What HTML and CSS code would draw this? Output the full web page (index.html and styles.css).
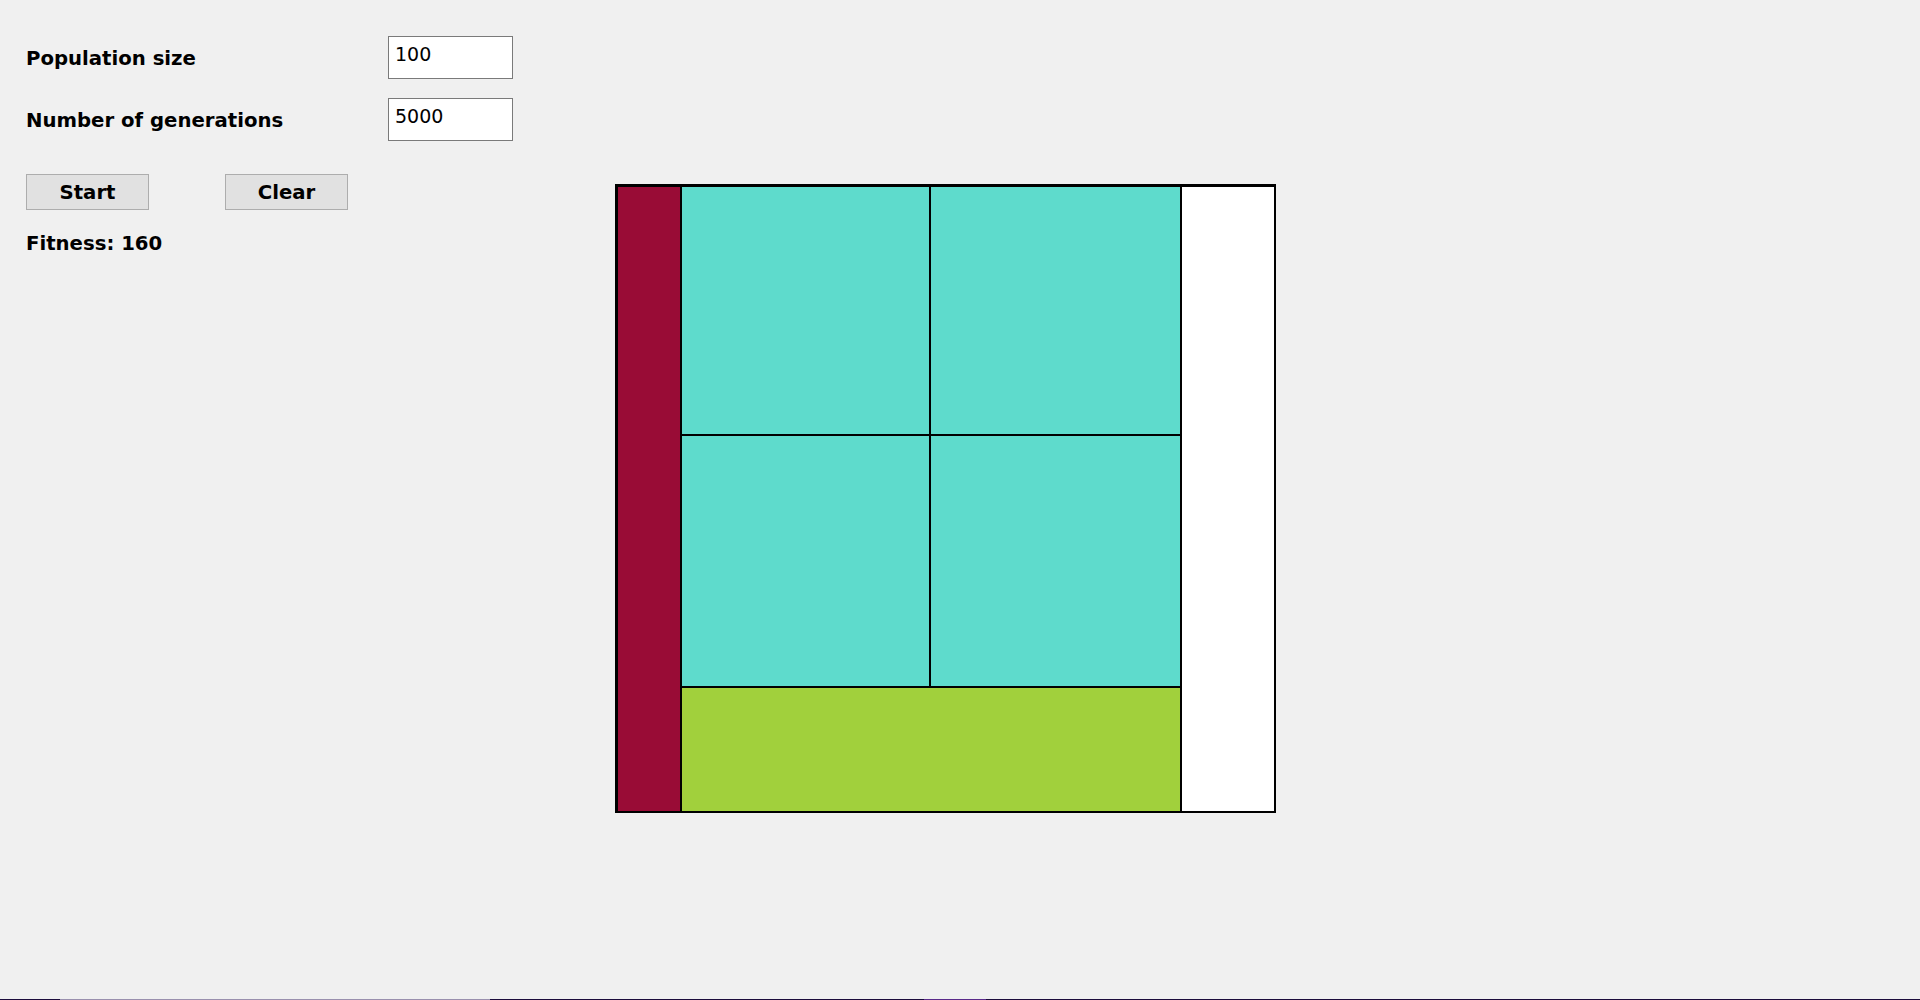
FILE: index.html
```html
<!DOCTYPE html>
<html>
<head>
<meta charset="utf-8">
<title>Genetic packing</title>
<link rel="stylesheet" href="styles.css">
</head>
<body>
<div class="page">
  <div class="controls">
    <div class="fields">
      <label class="label" for="pop">Population size</label>
      <input class="field" id="pop" type="text" value="100">
      <label class="label" for="gen">Number of generations</label>
      <input class="field" id="gen" type="text" value="5000">
    </div>
    <div class="buttons">
      <button class="btn" type="button">Start</button>
      <button class="btn" type="button">Clear</button>
    </div>
    <div class="fitness">Fitness: 160</div>
  </div>
  <div class="board">
    <svg width="661" height="629" viewBox="0 0 661 629" xmlns="http://www.w3.org/2000/svg">
      <rect x="0" y="0" width="661" height="629" fill="#000"/>
      <rect x="3" y="3" width="62" height="624" fill="#990c36"/>
      <rect x="67" y="3" width="247" height="247" fill="#5edbcc"/>
      <rect x="316" y="3" width="249" height="247" fill="#5edbcc"/>
      <rect x="67" y="252" width="247" height="250" fill="#5edbcc"/>
      <rect x="316" y="252" width="249" height="250" fill="#5edbcc"/>
      <rect x="67" y="504" width="498" height="123" fill="#a1d03c"/>
      <rect x="567" y="3" width="92" height="624" fill="#ffffff"/>
    </svg>
  </div>
</div>
<div class="taskline">
  <span class="seg seg-a"></span>
  <span class="seg seg-b"></span>
</div>
</body>
</html>
```

FILE: styles.css
```css
html, body {
  margin: 0;
  padding: 0;
  height: 1000px;
  background: #f0f0f0;
}

body {
  display: flex;
  flex-direction: column;
  font-family: "DejaVu Sans", Verdana, sans-serif;
  color: #000;
}

.page {
  flex: 1;
  display: flex;
  align-items: flex-start;
  padding: 36px 0 0 26px;
}

.controls {
  width: 589px;
  display: flex;
  flex-direction: column;
}

.fields {
  display: grid;
  grid-template-columns: 362px 125px;
  row-gap: 19px;
  align-items: center;
}

.label {
  padding-top: 2px;
  font-size: 19.7px;
  font-weight: bold;
}

.field {
  box-sizing: border-box;
  width: 125px;
  height: 43px;
  margin: 0;
  padding: 0 6px 7px 6px;
  border: 1px solid #7a7a7a;
  background: #fff;
  font-family: "DejaVu Sans", Verdana, sans-serif;
  font-size: 19px;
  color: #000;
  outline: none;
}

.buttons {
  display: flex;
  gap: 76px;
  margin-top: 33px;
}

.btn {
  box-sizing: border-box;
  width: 123px;
  height: 36px;
  margin: 0;
  padding: 1px 0 0 0;
  border: 1px solid #adadad;
  background: #e1e1e1;
  font-family: "DejaVu Sans", Verdana, sans-serif;
  font-size: 19.7px;
  font-weight: bold;
  color: #000;
}

.fitness {
  margin-top: 22px;
  font-size: 19.7px;
  font-weight: bold;
}

.board {
  margin-top: 148px;
  line-height: 0;
}

.board svg {
  display: block;
}

.taskline {
  height: 1px;
  display: flex;
  background: #1b0b3c;
}

.seg {
  height: 1px;
}

.seg-a {
  margin-left: 60px;
  width: 430px;
  background: #9a90ae;
}

.seg-b {
  margin-left: 434px;
  width: 62px;
  background: #5a2a8a;
}
```
